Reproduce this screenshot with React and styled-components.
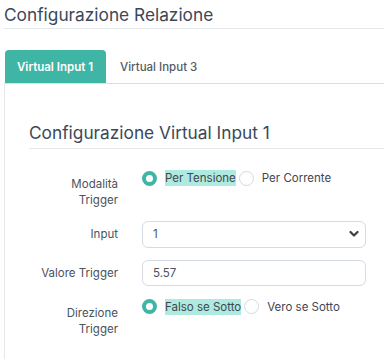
import React from "react";
import styled, { createGlobalStyle } from "styled-components";

const Global = createGlobalStyle`
  html, body { margin: 0; padding: 0; background: #ffffff; }
  body { font-family: Inter, "Noto Sans", Arial, sans-serif; color: #3b4757; }
  * { box-sizing: border-box; }
`;

const Page = styled.div`
  display: flex;
  flex-direction: column;
  height: 100vh;
  padding: 4px 0 0 4px;
  width: 384px;
  overflow: hidden;
`;

const Title = styled.h2`
  margin: 0;
  font-size: 17.3px;
  line-height: 22px;
  font-weight: 400;
  color: #3a4858;
  padding: 0 0 2px 0;
  border-bottom: 1px solid #e3e6ea;
`;

const TabList = styled.div`
  display: flex;
  margin-top: 21px;
  border-bottom: 1px solid #dedede;
`;

const Tab = styled.div`
  height: 33px;
  display: flex;
  align-items: center;
  padding: 0 13px 0 12px;
  margin-left: ${(p) => (p.$first ? "1px" : "2px")};
  border-radius: 4px 4px 0 0;
  font-size: 11.5px;
  font-weight: ${(p) => (p.$active ? 600 : 500)};
  background: ${(p) => (p.$active ? "#3fb5a6" : "transparent")};
  color: ${(p) => (p.$active ? "#ffffff" : "#555b63")};
`;

const Panel = styled.div`
  flex: 1;
  border-left: 1px solid #e6e6e6;
  padding: 37px 0 0 24px;
`;

const SubTitle = styled.h3`
  margin: 0 0 21px 0;
  font-size: 17.3px;
  line-height: 24px;
  font-weight: 400;
  color: #3a4858;
  padding-bottom: 3px;
  border-bottom: 1px solid #e3e6ea;
`;

const Form = styled.div`
  display: flex;
  flex-direction: column;
  gap: 12.5px;
`;

const Row = styled.div`
  display: grid;
  grid-template-columns: 89px 224px;
  column-gap: 24px;
  align-items: ${(p) => (p.$center ? "center" : "start")};
`;

const Label = styled.div`
  text-align: right;
  font-size: 11.5px;
  line-height: 16px;
  color: #4a525c;
  padding-top: ${(p) => (p.$top ? "6px" : "0")};
`;

const RadioGroup = styled.div`
  display: flex;
  align-items: center;
  height: 16px;
`;

const Radio = styled.span`
  width: 15px;
  height: 15px;
  border-radius: 50%;
  flex: none;
  margin-right: 8px;
  border: ${(p) => (p.$checked ? "4.5px solid #3fb5a6" : "1px solid #d3d9e2")};
  background: #fff;
`;

const RadioText = styled.span`
  font-size: 11.5px;
  line-height: 16px;
  color: #3f4650;
  background: ${(p) => (p.$checked ? "#aeeadf" : "transparent")};
  margin-right: 3px;
`;

const Field = styled.div`
  height: ${(p) => p.$h || 27}px;
  border: 1px solid #d5dbe4;
  border-radius: 6px;
  display: flex;
  align-items: center;
  justify-content: space-between;
  padding: 0 6px 0 10px;
  font-size: 11.5px;
  color: #4a525c;
`;

const Chevron = () => (
  <svg width="10" height="8" viewBox="0 0 10 8">
    <path d="M1.5 2 L5 5.5 L8.5 2" fill="none" stroke="#3a3f45" strokeWidth="2.2" strokeLinecap="round" strokeLinejoin="round" />
  </svg>
);

const RadioItem = ({ checked, children }) => (
  <>
    <Radio $checked={checked} />
    <RadioText $checked={checked}>{children}</RadioText>
  </>
);

export default function App() {
  return (
    <>
      <Global />
      <Page>
        <Title>Configurazione Relazione</Title>
        <TabList>
          <Tab $active $first>Virtual Input 1</Tab>
          <Tab>Virtual Input 3</Tab>
        </TabList>
        <Panel>
          <SubTitle>Configurazione Virtual Input 1</SubTitle>
          <Form>
            <Row>
              <Label $top>Modalità<br />Trigger</Label>
              <RadioGroup>
                <RadioItem checked>Per Tensione</RadioItem>
                <RadioItem>Per Corrente</RadioItem>
              </RadioGroup>
            </Row>
            <Row $center>
              <Label>Input</Label>
              <Field>
                <span>1</span>
                <Chevron />
              </Field>
            </Row>
            <Row $center>
              <Label>Valore Trigger</Label>
              <Field $h={26}>5.57</Field>
            </Row>
            <Row>
              <Label $top>Direzione<br />Trigger</Label>
              <RadioGroup>
                <RadioItem checked>Falso se Sotto</RadioItem>
                <RadioItem>Vero se Sotto</RadioItem>
              </RadioGroup>
            </Row>
          </Form>
        </Panel>
      </Page>
    </>
  );
}
